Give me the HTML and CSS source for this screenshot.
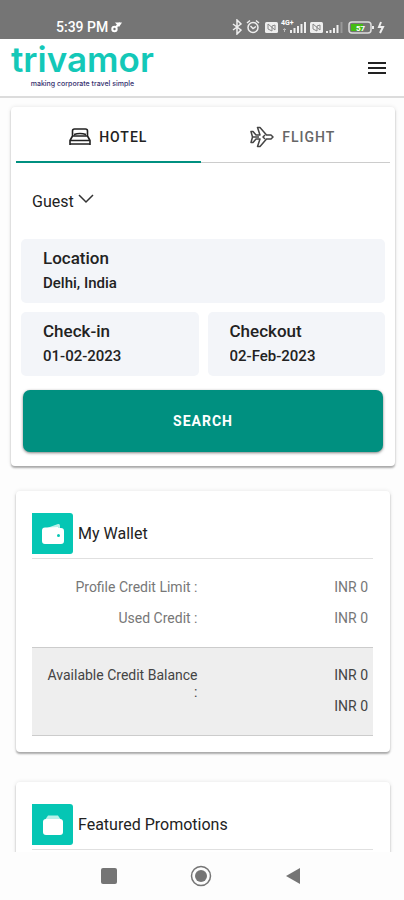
FILE: index.html
```html
<!DOCTYPE html>
<html lang="en">
<head>
<meta charset="utf-8">
<meta name="viewport" content="width=device-width, initial-scale=1">
<title>Trivamor</title>
<link rel="stylesheet" href="styles.css">
</head>
<body>
<div class="app">
  <div class="status">
    <span class="status-time">5:39 PM</span>
    <svg class="status-note" width="12" height="12" viewBox="0 0 12 12" fill="none" stroke="#fff" stroke-width="2"><circle cx="3.500" cy="8" r="2.200"/><path d="M5 6l4-4"/><path d="M4 1.500h7L8 6z" fill="#fff" stroke="none"/></svg>
    <svg class="status-icons" width="154" height="16" viewBox="0 0 154 16" fill="none" stroke="#eee">
      <path d="M1 5l8 6-4 4V1l4 4-8 6" stroke-width="1.5"/>
      <circle cx="21" cy="8.500" r="5" stroke-width="1.500"/><path d="M18.500 7l2.500 2.500L24 7.500M15 4l3-2.500M27 4l-3-2.500" stroke-width="1.500"/>
      <rect x="33" y="3" width="13" height="11" rx="1.500" fill="#eee" stroke="none"/>
      <path d="M36 5v5l4 2V7l3-1v5M36 5l7 6" stroke="#888"/>
      <path d="M73 14V3M69.500 14V5M66 14V7M62.500 14V9M59 14v-3" stroke-width="2"/>
      <path d="M52.500 10v3M51 11l1.500-1.500L54 11" stroke="#bbb"/>
      <rect x="78" y="3" width="13" height="11" rx="1.500" fill="#eee" stroke="none"/>
      <path d="M81 5v5l4 2V7l3-1v5M81 5l7 6" stroke="#888"/>
      <path d="M95 14v-2M98.500 14v-3M102 14V9M105.500 14V6" stroke-width="2"/><path d="M109.500 14V3" stroke="#999" stroke-width="2"/>
      <rect x="117" y="3" width="22" height="11" rx="3" stroke="#ddd" stroke-width="1.500"/>
      <rect x="119" y="5" width="12" height="7" fill="#44bb12" stroke="none"/><path d="M141 7v3" stroke-width="2"/>
      <path d="M149 3l-2 5h4l-3 6" stroke-width="2"/>
      <text x="49" y="6" class="net-label">4G+</text>
      <text x="124" y="12" class="battery-label">57</text>
    </svg>
  </div>

  <header class="header">
    <a class="brand" href="#">
      <span class="brand-name">trivamor</span>
      <span class="brand-tag">making corporate travel simple</span>
    </a>
    <button class="menu" type="button" aria-label="Menu">
      <svg width="18" height="14" viewBox="0 0 18 14" stroke="#222" stroke-width="2"><path d="M0 2h18M0 7h18M0 12h18"/></svg>
    </button>
  </header>

  <main class="content">
    <form class="card search">
      <div class="tabs" role="tablist">
        <button class="tab tab-active" type="button" role="tab" aria-selected="true">
          <svg width="22" height="18" viewBox="0 0 22 18" fill="none" stroke="#222" stroke-width="1.600" stroke-linejoin="round"><path d="M3.500 8V3q0-2 2-2h11q2 0 2 2v5M1 17v-4.500L3.500 8h15l2.500 4.500V17M1 16h20M1 12.500h20M5 6.500q6-2 12 0"/></svg>
          Hotel
        </button>
        <button class="tab" type="button" role="tab" aria-selected="false">
          <svg width="24" height="22" viewBox="0 0 24 22" fill="none" stroke="#444" stroke-width="1.500" stroke-linejoin="round"><path d="M1 5.500h2L6 9h4L7.500 1.500h2.500L16.500 9H21l2 2-2 2h-4.500L10 20.500H7.500L10 13H6l-3 3.500H1L2.500 11zM3 11h6M15 9l-2 2 2 2"/></svg>
          Flight
        </button>
      </div>
      <button class="guest" type="button">Guest
        <svg width="16" height="10" viewBox="0 0 16 10" fill="none" stroke="#333" stroke-width="1.500"><path d="M1 1l7 7 7-7"/></svg>
      </button>
      <div class="fields">
        <div class="field field-wide">
          <label for="location">Location</label>
          <input id="location" type="text" value="Delhi, India">
        </div>
        <div class="field">
          <label for="checkin">Check-in</label>
          <input id="checkin" type="text" value="01-02-2023">
        </div>
        <div class="field">
          <label for="checkout">Checkout</label>
          <input id="checkout" type="text" value="02-Feb-2023">
        </div>
      </div>
      <button class="submit" type="button">Search</button>
    </form>

    <section class="card panel">
      <h2 class="panel-title">
        <span class="panel-icon">
          <svg width="24" height="22" viewBox="0 0 24 22"><path d="M6 5l11-4q2-.5 2 1.500V6H6z" fill="#b9f1e9"/><path d="M4 4.500h3L17 4v1h3q3 0 3 3v10q0 3-3 3H4q-3 0-3-3V7.500q0-3 3-3z" fill="#fff"/><circle cx="17.500" cy="12.500" r="1.500" fill="#05c6b4"/></svg>
        </span>
        My Wallet
      </h2>
      <dl class="amounts">
        <dt>Profile Credit Limit :</dt><dd>INR 0</dd>
        <dt>Used Credit :</dt><dd>INR 0</dd>
      </dl>
      <dl class="amounts amounts-total">
        <dt>Available Credit Balance :</dt>
        <dd>INR 0</dd>
        <dd>INR 0</dd>
      </dl>
    </section>

    <section class="card panel">
      <h2 class="panel-title">
        <span class="panel-icon">
          <svg width="22" height="22" viewBox="0 0 22 22"><path d="M6 1.500h10L19 6H3z" fill="#b9f1e9"/><rect x="1" y="5" width="20" height="16" rx="3" fill="#fff"/></svg>
        </span>
        Featured Promotions
      </h2>
    </section>
  </main>

  <nav class="sysnav">
    <button type="button" aria-label="Recent apps"><svg width="22" height="22" viewBox="0 0 22 22"><rect x="3" y="3" width="16" height="16" rx="2" fill="#757575"/></svg></button>
    <button type="button" aria-label="Home"><svg width="22" height="22" viewBox="0 0 22 22"><circle cx="11" cy="11" r="9.500" fill="none" stroke="#757575" stroke-width="1.500"/><circle cx="11" cy="11" r="6" fill="#757575"/></svg></button>
    <button type="button" aria-label="Back"><svg width="22" height="22" viewBox="0 0 22 22"><path d="M4 11L18 3v16z" fill="#757575"/></svg></button>
  </nav>
</div>
</body>
</html>
```
FILE: styles.css
```css
* { box-sizing: border-box; }

body {
  margin: 0;
  font-family: Roboto, "Liberation Sans", sans-serif;
  color: #222;
  background: #fdfdfd;
}

button, input { font: inherit; color: inherit; border: 0; padding: 0; background: none; }
svg { flex: none; }

.app { display: flex; flex-direction: column; height: 100vh; }

.status {
  display: flex;
  align-items: center;
  height: 39px;
  padding: 14px 18px 0 56px;
  background: #757575;
  color: #fff;
}
.status-time { font-size: 14px; font-weight: 500; }
.status-note { margin-left: 3px; }
.status-icons { margin-left: auto; }
.net-label, .battery-label { font-weight: 700; fill: #fff; stroke: none; }
.net-label { font-size: 7px; }
.battery-label { font-size: 8px; }

.header {
  display: flex;
  align-items: center;
  justify-content: space-between;
  height: 59px;
  padding: 0 18px 0 11px;
  background: #fff;
  border-bottom: 2px solid #dcdcdc;
}
.brand {
  display: flex;
  flex-direction: column;
  align-items: center;
  gap: 3px;
  padding-bottom: 6px;
  text-decoration: none;
}
.brand-name { font: 600 35px/36px Inter, sans-serif; color: #14c8b8; }
.brand-tag { font: 500 7px/8px Inter, sans-serif; color: #35306e; }
.menu { display: flex; }

.content { flex: 1; min-height: 0; overflow: hidden; padding-top: 9px; }

.card {
  background: #fff;
  border-radius: 4px;
  box-shadow: 0 2px 2px rgba(0, 0, 0, .3), 0 0 4px rgba(0, 0, 0, .1);
}

.search { margin: 0 9px 25px 11px; padding: 5px 5px 14px; }
.tabs { display: flex; height: 51px; padding-right: 5px; border-bottom: 1px solid #ccc; }
.tab {
  flex: 1;
  display: flex;
  align-items: center;
  justify-content: center;
  gap: 8px;
  margin-bottom: -1px;
  font-size: 14px;
  font-weight: 500;
  letter-spacing: 1px;
  text-transform: uppercase;
  color: #666;
  border-bottom: 2px solid transparent;
}
.tab-active { color: #222; border-color: #009080; }

.guest {
  display: flex;
  align-items: center;
  gap: 4px;
  height: 76px;
  margin-left: 16px;
  font-size: 16px;
}
.guest svg { margin-bottom: 4px; }

.fields { display: grid; grid-template-columns: 1fr 1fr; gap: 9px; margin: 0 5px; }
.field {
  display: flex;
  flex-direction: column;
  height: 64px;
  padding: 8px 8px 0 22px;
  border-radius: 5px;
  background: #f3f5f9;
}
.field-wide { grid-column: 1 / -1; }
.field label { font-size: 17px; line-height: 22px; font-weight: 500; }
.field input { width: 100%; height: 28px; font-size: 15px; font-weight: 500; }

.submit {
  display: block;
  width: calc(100% - 14px);
  height: 62px;
  margin: 14px 7px 0;
  border-radius: 7px;
  background: #009080;
  color: #fff;
  font-size: 14px;
  font-weight: 700;
  letter-spacing: 1px;
  text-transform: uppercase;
  box-shadow: 0 1px 3px rgba(0, 0, 0, .5);
}

.panel { margin: 0 14px 30px 16px; padding: 22px 17px 16px 16px; }
.panel-title {
  display: flex;
  align-items: center;
  gap: 5px;
  margin: 0;
  padding-bottom: 4px;
  border-bottom: 1px solid #e0e0e0;
  font-size: 16px;
  font-weight: 400;
}
.panel-icon {
  display: grid;
  place-items: center;
  width: 41px;
  height: 41px;
  border-radius: 0 3px 3px 0;
  background: #05c6b4;
}

.amounts {
  display: grid;
  grid-template-columns: 1fr 1fr;
  row-gap: 14px;
  margin: 0;
  padding: 20px 5px;
  font-size: 14px;
  line-height: 17px;
  color: #777;
  text-align: right;
}
.amounts dt { padding: 0 5px; }
.amounts dd { margin: 0; }
.amounts-total {
  padding: 19px 5px 20px;
  background: #eee;
  border-top: 1px solid #ccc;
  border-bottom: 1px solid #ccc;
  color: #444;
}
.amounts-total dt { grid-row: span 2; }

.sysnav {
  display: flex;
  justify-content: center;
  align-items: center;
  gap: 70px;
  height: 48px;
  padding-right: 2px;
  background: #fdfdfd;
}
.sysnav button { display: flex; }
```
